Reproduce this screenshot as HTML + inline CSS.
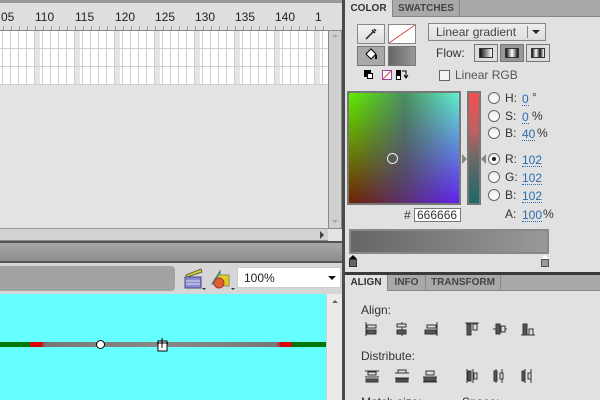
<!DOCTYPE html>
<html><head><style>
*{margin:0;padding:0;box-sizing:border-box}
html,body{width:600px;height:400px;overflow:hidden}
body{position:relative;background:#e3e3e3;font-family:"Liberation Sans",Arial,sans-serif;font-size:11px;color:#333}
.a{position:absolute}
.num{position:absolute;top:10px;font-size:12px;color:#222}
.lbl{position:absolute;font-size:12px;color:#333}
.val{position:absolute;font-size:12px;color:#2b6cb0;border-bottom:1px dotted #2b6cb0;line-height:12px}
.rad{position:absolute;width:12px;height:12px;border-radius:50%;border:1px solid #666;background:linear-gradient(#eee,#fff)}
.tab{position:absolute;top:0;height:17px;font-size:10px;font-weight:bold;line-height:17px;text-align:center}
</style></head><body>
<div class="a" style="left:0;top:0;width:343px;height:30px;background:#dedede"></div>
<div class="a" style="left:0;top:0;width:343px;height:3px;background:#9a9a9a"></div>
<span class="num" style="left:1px">05</span>
<span class="num" style="left:35px">110</span>
<span class="num" style="left:75px">115</span>
<span class="num" style="left:115px">120</span>
<span class="num" style="left:155px">125</span>
<span class="num" style="left:195px">130</span>
<span class="num" style="left:235px">135</span>
<span class="num" style="left:275px">140</span>
<span class="num" style="left:315px">1</span>
<div class="a" style="left:0;top:26px;width:328px;height:4px;background:repeating-linear-gradient(90deg,transparent 0 3px,#999 3px 4px,transparent 4px 8px)"></div>
<div class="a" style="left:0;top:30px;width:328px;height:1px;background:#888"></div>
<div class="a" style="left:0;top:31px;width:328px;height:54px;background:#fff"></div>
<div class="a" style="left:0;top:31px;width:328px;height:54px;background:repeating-linear-gradient(90deg,transparent 0 35px,#e4e4e4 35px 43px,transparent 43px 40px);background-size:40px 100%"></div>
<div class="a" style="left:0;top:31px;width:328px;height:54px;background:
repeating-linear-gradient(180deg,transparent 0 17px,#cfcfcf 17px 18px),
repeating-linear-gradient(90deg,transparent 0 2px,#cfcfcf 2px 3px,transparent 3px 8px)"></div>
<div class="a" style="left:328px;top:30px;width:14px;height:199px;background:#d0d0d0;border:1px solid #888"></div>
<div class="a" style="left:332px;top:34px;width:0;height:0;border-left:3px solid transparent;border-right:3px solid transparent;border-bottom:3px solid #aaa"></div>
<div class="a" style="left:332px;top:220px;width:0;height:0;border-left:3px solid transparent;border-right:3px solid transparent;border-top:3px solid #aaa"></div>
<div class="a" style="left:0;top:228px;width:328px;height:13px;background:#d2d2d2;border-top:1px solid #999;border-bottom:1px solid #888"></div>
<div class="a" style="left:320px;top:231px;width:0;height:0;border-top:4px solid transparent;border-bottom:4px solid transparent;border-left:4px solid #444"></div>
<div class="a" style="left:0;top:241px;width:343px;height:22px;background:linear-gradient(#a8a8a8,#8c8c8c);border-top:2px solid #555;border-bottom:2px solid #555"></div>
<div class="a" style="left:0;top:263px;width:343px;height:31px;background:#d6d6d6"></div>
<div class="a" style="left:-10px;top:266px;width:185px;height:25px;background:#a3a3a3;border-radius:4px"></div>
<svg class="a" style="left:183px;top:266px" width="26" height="26">
<rect x="2" y="11" width="16" height="11" fill="#8a8ad0" stroke="#44448a"/>
<line x1="3" y1="15" x2="17" y2="15" stroke="#dde"/><line x1="3" y1="18" x2="17" y2="18" stroke="#dde"/>
<path d="M3 9 L18 3 L19 6 L4 11Z" fill="#d8d020" stroke="#665"/>
<path d="M19 22 l4 0 l-2 2z" fill="#333"/></svg>
<svg class="a" style="left:209px;top:266px" width="26" height="26">
<path d="M3 18 L11 5 L11 18Z" fill="#4cc8a0" stroke="#286"/>
<rect x="9" y="9" width="11" height="11" fill="#e0d020" stroke="#886"/>
<circle cx="10" cy="17" r="5" fill="#e06030" stroke="#a33"/>
<path d="M22 22 l4 0 l-2 2z" fill="#333"/></svg>
<div class="a" style="left:237px;top:267px;width:104px;height:21px;background:#fff;border:1px solid #ccc;font-size:12px;padding:3px 0 0 6px;color:#222">100%</div>
<div class="a" style="left:328px;top:276px;width:0;height:0;border-left:4px solid transparent;border-right:4px solid transparent;border-top:4px solid #111"></div>
<div class="a" style="left:0;top:294px;width:326px;height:106px;background:#66ffff"></div>
<div class="a" style="left:326px;top:294px;width:17px;height:106px;background:#ebebeb;border-left:1px solid #ccc"></div>
<div class="a" style="left:332px;top:300px;width:0;height:0;border-left:3px solid transparent;border-right:3px solid transparent;border-bottom:3px solid #666"></div>
<div class="a" style="left:0;top:342px;width:326px;height:5px;background:#007700"></div>
<div class="a" style="left:30px;top:342px;width:262px;height:5px;background:linear-gradient(90deg,#d00 0 4%,#777 6%,#888 50%,#777 94%,#d00 96%)"></div>
<div class="a" style="left:96px;top:340px;width:9px;height:9px;border-radius:50%;background:#fff;border:1px solid #000"></div>
<svg class="a" style="left:156px;top:337px" width="14" height="15"><rect x="2" y="4" width="9" height="10" fill="#fff" stroke="#000"/><path d="M6 1v10M1 6h11" stroke="#000"/></svg>
<div class="a" style="left:342px;top:0;width:3px;height:400px;background:#4a4a4a"></div>
<div class="a" style="left:345px;top:0;width:255px;height:272px;background:#e1e1e1"></div>
<div class="a" style="left:345px;top:0;width:255px;height:17px;background:#a9a9a9;border-bottom:1px solid #888"></div>
<div class="tab" style="left:345px;width:47px;background:#e1e1e1;height:18px;color:#333">COLOR</div>
<div class="tab" style="left:392px;width:68px;color:#444;border-right:1px solid #888;border-left:1px solid #888">SWATCHES</div>
<div class="a" style="left:357px;top:24px;width:28px;height:20px;border:1px solid #888;background:linear-gradient(#f4f4f4,#ddd)"></div>
<svg class="a" style="left:364px;top:27px" width="14" height="14"><path d="M2 12 L9 5 M8 3 l3 3 M10 2 l2 2" stroke="#222" stroke-width="1.5" fill="none"/></svg>
<div class="a" style="left:388px;top:24px;width:28px;height:20px;border:1px solid #888;background:#fff"></div>
<svg class="a" style="left:388px;top:24px" width="28" height="20"><line x1="1" y1="19" x2="27" y2="1" stroke="#d44" /></svg>
<div class="a" style="left:357px;top:46px;width:28px;height:20px;border:1px solid #777;background:#a8a8a8"></div>
<svg class="a" style="left:363px;top:47px" width="16" height="16"><path d="M3 7 L8 2 L13 7 L8 12Z" fill="#fff" stroke="#000"/><path d="M13 8 v4" stroke="#000" stroke-width="2"/></svg>
<div class="a" style="left:388px;top:46px;width:28px;height:20px;border:1px solid #777;background:linear-gradient(90deg,#666,#999)"></div>
<div class="a" style="left:364px;top:70px;width:7px;height:7px;background:#000"></div>
<div class="a" style="left:367px;top:73px;width:6px;height:6px;background:#fff;border:1px solid #000"></div>
<div class="a" style="left:382px;top:70px;width:10px;height:10px;background:#fff;border:1px solid #a040a0"></div>
<svg class="a" style="left:382px;top:70px" width="10" height="10"><line x1="1" y1="9" x2="9" y2="1" stroke="#d44"/></svg>
<div class="a" style="left:396px;top:70px;width:5px;height:5px;background:#000"></div>
<div class="a" style="left:396px;top:75px;width:5px;height:5px;background:#fff;border:1px solid #000"></div>
<svg class="a" style="left:401px;top:69px" width="8" height="11"><path d="M1 2h4v6M3 6l2 3 2-3" stroke="#000" fill="none"/></svg>
<div class="a" style="left:428px;top:23px;width:118px;height:18px;border:1px solid #888;background:linear-gradient(#eee,#ddd);font-size:12px;color:#444;padding:1px 0 0 7px">Linear gradient</div>
<div class="a" style="left:527px;top:26px;width:1px;height:12px;background:#888"></div>
<div class="a" style="left:532px;top:30px;width:0;height:0;border-left:4px solid transparent;border-right:4px solid transparent;border-top:4px solid #222"></div>
<span class="lbl" style="left:436px;top:46px">Flow:</span>
<div class="a" style="left:474px;top:44px;width:24px;height:18px;border:1px solid #777;background:#ddd;padding:3px 4px"><div style="width:100%;height:100%;background:linear-gradient(90deg,#111,#fff);border:1px solid #333"></div></div>
<div class="a" style="left:500px;top:44px;width:24px;height:18px;border:1px solid #777;background:#999;padding:3px 4px"><div style="width:100%;height:100%;background:linear-gradient(90deg,#111,#fff,#111);border:1px solid #333"></div></div>
<div class="a" style="left:526px;top:44px;width:24px;height:18px;border:1px solid #777;background:#ddd;padding:3px 4px"><div style="width:100%;height:100%;background:linear-gradient(90deg,#111,#fff,#111,#fff);border:1px solid #333"></div></div>
<div class="a" style="left:439px;top:70px;width:11px;height:11px;border:1px solid #666;background:#f4f4f4"></div>
<span class="lbl" style="left:455px;top:68px;color:#555">Linear RGB</span>
<div class="a" style="left:347px;top:91px;width:114px;height:114px;background:#777"></div>
<div class="a" style="left:349px;top:93px;width:110px;height:110px;background:linear-gradient(90deg,#60f000,#4a9060 50%,#60f0d0)"></div>
<div class="a" style="left:349px;top:93px;width:110px;height:110px;background:linear-gradient(90deg,#702000,#5a3070 50%,#6020f0);-webkit-mask-image:linear-gradient(transparent,#000);mask-image:linear-gradient(transparent,#000)"></div>
<div class="a" style="left:387px;top:153px;width:11px;height:11px;border-radius:50%;border:1px solid #eee"></div>
<div class="a" style="left:467px;top:91px;width:14px;height:114px;background:#777"></div>
<div class="a" style="left:469px;top:93px;width:10px;height:110px;background:linear-gradient(#f05050,#c06060 35%,#686868 60%,#1a6a6a)"></div>
<div class="a" style="left:462px;top:154px;width:0;height:0;border-top:5px solid transparent;border-bottom:5px solid transparent;border-left:5px solid #888"></div>
<div class="a" style="left:481px;top:154px;width:0;height:0;border-top:5px solid transparent;border-bottom:5px solid transparent;border-right:5px solid #888"></div>
<div class="rad" style="left:488px;top:92px"></div><span class="lbl" style="left:505px;top:91px">H:</span><span class="val" style="left:522px;top:93px">0</span><span class="lbl" style="left:532px;top:90px">°</span>
<div class="rad" style="left:488px;top:110px"></div><span class="lbl" style="left:505px;top:109px">S:</span><span class="val" style="left:522px;top:111px">0</span><span class="lbl" style="left:532px;top:109px">%</span>
<div class="rad" style="left:488px;top:127px"></div><span class="lbl" style="left:505px;top:126px">B:</span><span class="val" style="left:522px;top:128px">40</span><span class="lbl" style="left:537px;top:126px">%</span>
<div class="rad" style="left:488px;top:153px"></div><div class="a" style="left:492px;top:157px;width:4px;height:4px;border-radius:50%;background:#222"></div><span class="lbl" style="left:505px;top:152px">R:</span><span class="val" style="left:522px;top:154px">102</span>
<div class="rad" style="left:488px;top:171px"></div><span class="lbl" style="left:505px;top:170px">G:</span><span class="val" style="left:522px;top:172px">102</span>
<div class="rad" style="left:488px;top:189px"></div><span class="lbl" style="left:505px;top:188px">B:</span><span class="val" style="left:522px;top:190px">102</span>
<span class="lbl" style="left:505px;top:207px">A:</span><span class="val" style="left:522px;top:209px">100</span><span class="lbl" style="left:543px;top:207px">%</span>
<span class="lbl" style="left:404px;top:208px">#</span>
<div class="a" style="left:414px;top:208px;width:47px;height:14px;border:1px solid #777;background:#fff;font-size:12px;line-height:12px;padding-left:2px;color:#333">666666</div>
<div class="a" style="left:349px;top:229px;width:200px;height:25px;border:2px solid #888;background:linear-gradient(90deg,#666,#999)"></div>
<div class="a" style="left:349px;top:255px;width:0;height:0;border-left:4px solid transparent;border-right:4px solid transparent;border-bottom:4px solid #000"></div>
<div class="a" style="left:349px;top:259px;width:8px;height:8px;background:#666;border:1px solid #333"></div>
<div class="a" style="left:541px;top:255px;width:0;height:0;border-left:4px solid transparent;border-right:4px solid transparent;border-bottom:4px solid #fff"></div>
<div class="a" style="left:541px;top:259px;width:8px;height:8px;background:#999;border:1px solid #555"></div>
<div class="a" style="left:345px;top:272px;width:255px;height:3px;background:#3a3a3a"></div>
<div class="a" style="left:345px;top:275px;width:255px;height:125px;background:#e1e1e1;overflow:hidden">
<span class="lbl" style="left:16px;top:120px">Match size:</span>
<span class="lbl" style="left:117px;top:120px">Space:</span>
</div>
<div class="a" style="left:345px;top:275px;width:255px;height:16px;background:#a9a9a9;border-bottom:1px solid #888"></div>
<div class="tab" style="left:345px;top:275px;width:42px;background:#e1e1e1;color:#333;height:17px;line-height:16px">ALIGN</div>
<div class="tab" style="left:387px;top:275px;width:39px;color:#444;height:16px;line-height:16px;border-right:1px solid #888;border-left:1px solid #888">INFO</div>
<div class="tab" style="left:426px;top:275px;width:75px;color:#444;height:16px;line-height:16px;border-right:1px solid #888">TRANSFORM</div>
<span class="lbl" style="left:361px;top:303px">Align:</span>
<span class="lbl" style="left:361px;top:349px">Distribute:</span>
<svg class="a" style="left:362px;top:321px" width="200" height="16" fill="#555" stroke="#333">
<path d="M4 1v14" fill="none"/><rect x="5" y="4" width="9" height="3" fill="#ddd"/><rect x="5" y="9" width="9" height="4"/>
<path d="M40 1v14" fill="none"/><rect x="35" y="3" width="9" height="3" fill="#ddd"/><rect x="35" y="9" width="9" height="4"/>
<path d="M75 1v14" fill="none"/><rect x="65" y="4" width="9" height="3" fill="#ddd"/><rect x="63" y="9" width="11" height="4"/>
<path d="M103 2h14" fill="none"/><rect x="105" y="3" width="4" height="11"/><rect x="111" y="3" width="4" height="6" fill="#ddd"/>
<path d="M131 8h14" fill="none"/><rect x="134" y="3" width="4" height="10"/><rect x="139" y="5" width="4" height="6" fill="#ddd"/>
<path d="M159 14h14" fill="none"/><rect x="161" y="3" width="4" height="11"/><rect x="167" y="8" width="4" height="6" fill="#ddd"/>
</svg>
<svg class="a" style="left:362px;top:368px" width="200" height="16" fill="#555" stroke="#333">
<path d="M3 3h14M3 9h14" fill="none"/><rect x="6" y="4" width="8" height="3" fill="#ddd"/><rect x="4" y="11" width="12" height="3"/>
<path d="M33 5h14M33 10h14" fill="none"/><rect x="36" y="2" width="8" height="3" fill="#ddd"/><rect x="34" y="11" width="12" height="3"/>
<path d="M61 9h14M61 14h14" fill="none"/><rect x="64" y="3" width="8" height="4" fill="#ddd"/><rect x="62" y="9" width="12" height="4"/>
<path d="M105 1v14M111 1v14" fill="none"/><rect x="106" y="3" width="3" height="10"/><rect x="112" y="5" width="3" height="6" fill="#ddd"/>
<path d="M134 1v14M140 1v14" fill="none"/><rect x="132" y="3" width="3" height="10"/><rect x="138" y="5" width="3" height="6" fill="#ddd"/>
<path d="M163 1v14M169 1v14" fill="none"/><rect x="160" y="3" width="3" height="10"/><rect x="166" y="5" width="3" height="6" fill="#ddd"/>
</svg>
</body></html>
